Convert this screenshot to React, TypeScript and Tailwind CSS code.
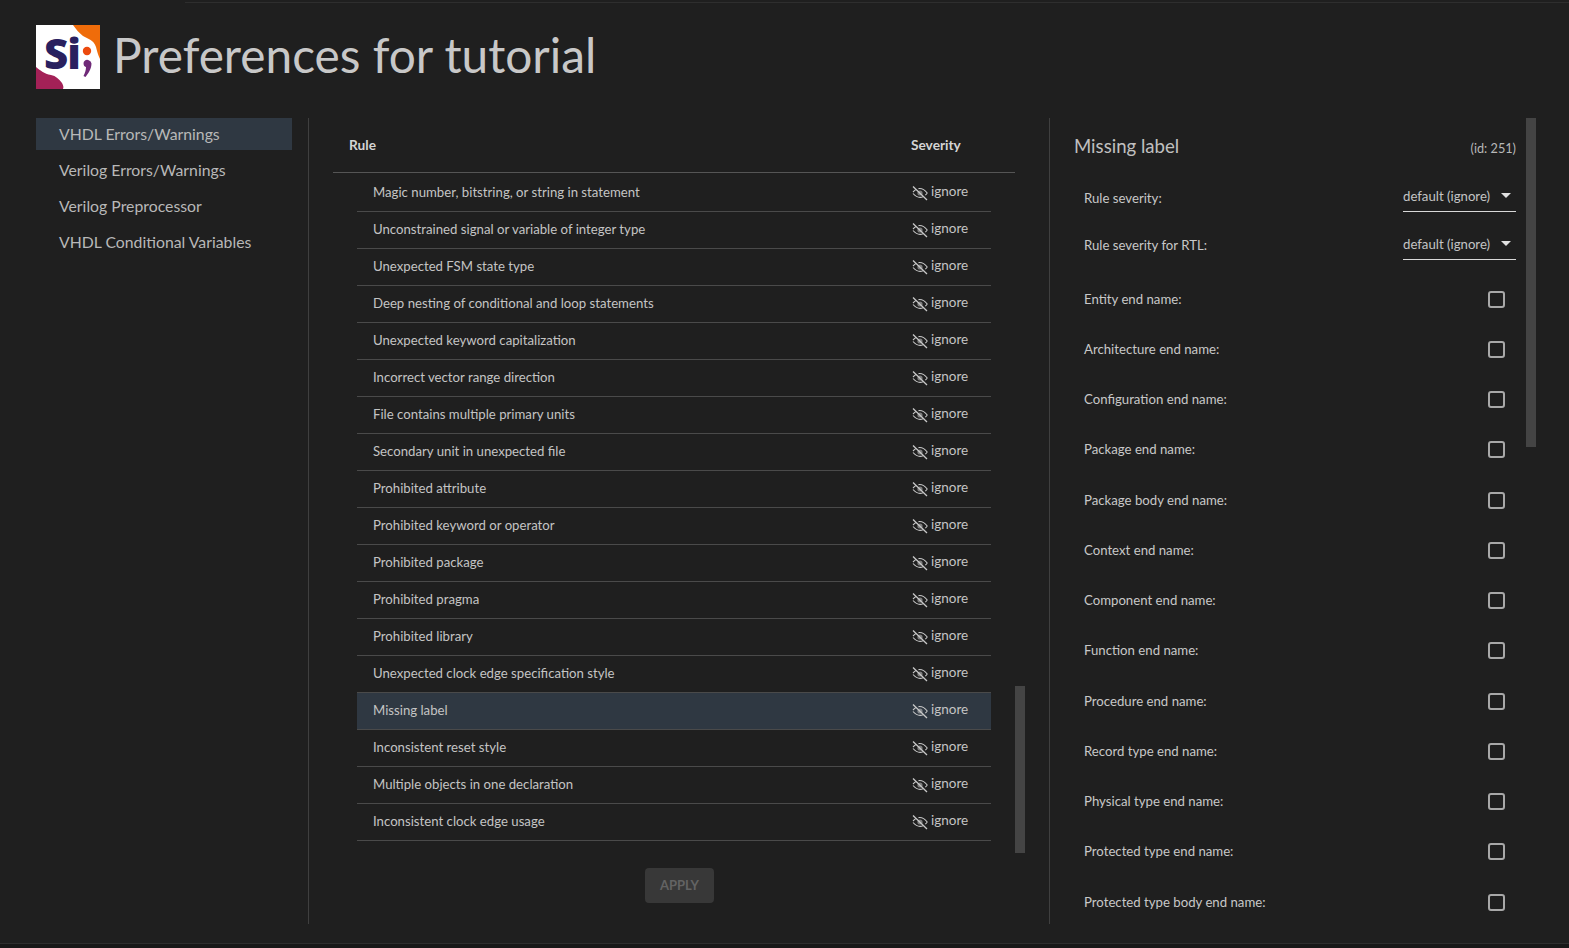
const rules = [
  "Magic number, bitstring, or string in statement",
  "Unconstrained signal or variable of integer type",
  "Unexpected FSM state type",
  "Deep nesting of conditional and loop statements",
  "Unexpected keyword capitalization",
  "Incorrect vector range direction",
  "File contains multiple primary units",
  "Secondary unit in unexpected file",
  "Prohibited attribute",
  "Prohibited keyword or operator",
  "Prohibited package",
  "Prohibited pragma",
  "Prohibited library",
  "Unexpected clock edge specification style",
  "Missing label",
  "Inconsistent reset style",
  "Multiple objects in one declaration",
  "Inconsistent clock edge usage",
];
const checks = [
  "Entity end name:",
  "Architecture end name:",
  "Configuration end name:",
  "Package end name:",
  "Package body end name:",
  "Context end name:",
  "Component end name:",
  "Function end name:",
  "Procedure end name:",
  "Record type end name:",
  "Physical type end name:",
  "Protected type end name:",
  "Protected type body end name:",
];
const nav = ["VHDL Errors/Warnings", "Verilog Errors/Warnings", "Verilog Preprocessor", "VHDL Conditional Variables"];

function Logo() {
  return (
    <svg width="64" height="64" viewBox="0 0 64 64" className="shrink-0">
      <rect width="64" height="64" fill="#ffffff" />
      <path d="M37 0H64V34C62 30 61 26 60 22C58 15 52 14 47 11C43 8 40 4 37 0Z" fill="#ef6c0a" />
      <path d="M0 42C4 45 8 49 15 50C20 51 23 54 26 58C27 60 28 62 27 64H0Z" fill="#a32157" />
      <text x="8" y="43.500" fontFamily="'Open Sans', sans-serif" fontWeight="800" fontSize="42" letterSpacing="-1" fill="#29205f">Si</text>
      <circle cx="51" cy="26" r="4.200" fill="#ec4a0e" />
      <path d="M48.500 36a4.200 4.200 0 0 1 7 2.500c0 5-3 10-6 13.500l-2-1c1.500-3 2.500-6 2.500-9c-2 0-3.500-4-1.500-6Z" fill="#6f2a78" />
    </svg>
  );
}

function EyeOff() {
  return (
    <svg width="16" height="16" viewBox="0 0 16 16" fill="none" stroke="#c8c8c8" strokeWidth="1.1" className="shrink-0">
      <path d="M1 1.500L15 15" strokeWidth="1.300" />
      <path d="M1 7C2 6 3 5 4 4.500M6.500 3.600C10 3.200 13 5 15.200 8C14.600 8.900 14 9.600 13.300 10.200M11 11.800C8 13 4 12 1 8.500" />
      <circle cx="8" cy="8" r="2.600" fill="#c8c8c8" fillOpacity="0.55" stroke="none" />
    </svg>
  );
}

function Select() {
  return (
    <div className="flex h-[27px] w-[113px] items-center justify-between border-b border-[#d8d8d8] pb-[4px] pr-[5px]">
      <span className="mt-[2px] text-[13.2px] text-[#c4c4c4]">default (ignore)</span>
      <span className="h-0 w-0 border-x-[5px] border-t-[5px] border-x-transparent border-t-[#e0e0e0]" />
    </div>
  );
}

export default function App() {
  return (
    <div className="flex h-[948px] w-full flex-col overflow-hidden bg-[#1f1f1f] text-[#c8c8c8]" style={{ fontFamily: "Lato, sans-serif" }}>
      <div className="ml-[185px] h-[3px] shrink-0 border-b border-[#2e2e2e]" />
      <div className="flex items-center gap-[14px] pb-[29px] pl-9 pt-[22px]">
        <Logo />
        <h1 className="-mt-[5px] -ml-px text-[47.8px] font-normal leading-[64px] text-[#c8c8c8]">Preferences for tutorial</h1>
      </div>
      <div className="flex h-[806px] shrink-0 pl-9">
        <nav className="w-[256px] shrink-0">
          {nav.map((n, i) => (
            <div key={n} className={`flex items-center pl-[23px] text-[15.8px] text-[#b8b8b8] ${i === 0 ? "mb-[2px] h-8 bg-[#2f3842]" : "h-9"}`}>{n}</div>
          ))}
        </nav>
        <div className="ml-4 w-[742px] shrink-0 border-x border-[#3f3f3f] pl-6">
          <div className="flex h-[55px] w-[682px] items-center border-b border-[#555555] pl-4 text-[13.7px] font-bold text-[#d4d4d4]">
            <span className="w-[562px]">Rule</span>
            <span>Severity</span>
          </div>
          <div className="flex h-[668px] items-start">
            <div className="ml-6 w-[634px] shrink-0">
              {rules.map((r, i) => (
                <div key={r} className={`flex items-center border-b border-[#4a4a4a] pl-4 text-[13.2px] ${i === 0 ? "h-[39px]" : "h-[37px] pb-[2px]"} ${r === "Missing label" ? "bg-[#2f3842]" : ""}`}>
                  <span className="mt-[2px] w-[539px] text-[#c4c4c4]">{r}</span>
                  <span className="flex items-center gap-[3px] text-[#c4c4c4]"><span className="mt-[2px] shrink-0"><EyeOff /></span><span className="-mt-px text-[13.5px]">ignore</span></span>
                </div>
              ))}
            </div>
            <div className="ml-6 mt-[513px] h-[167px] w-2.5 shrink-0 bg-[#444444]" />
          </div>
          <div className="mt-[27px] flex w-[682px] justify-center pl-[11px]">
            <button className="h-[35px] w-[69px] rounded bg-[#383838] text-[13px] font-bold text-[#636363]">APPLY</button>
          </div>
        </div>
        <div className="flex shrink-0">
          <div className="w-[466px] shrink-0 pl-6">
            <div className="flex h-[56px] items-center justify-between">
              <span className="mt-[2px] text-[18.6px] text-[#c0c0c0]">Missing label</span>
              <span className="mt-[6px] text-[12.7px] text-[#b8b8b8]">(id: 251)</span>
            </div>
            <div className="flex h-[48px] items-center justify-between pl-[10px]">
              <span className="mt-[2px] text-[13.2px]">Rule severity:</span><Select />
            </div>
            <div className="flex h-[48px] items-center justify-between pl-[10px]">
              <span className="text-[13.2px]">Rule severity for RTL:</span><Select />
            </div>
            <div className="mt-[4px]">
              {checks.map(c => (
                <div key={c} className="flex h-[50.25px] items-center justify-between pl-[10px] pr-[11px]">
                  <span className="mt-px text-[13.2px]">{c}</span>
                  <span className="h-[17px] w-[17px] rounded-[3px] border-2 border-[#a8a8a8]" />
                </div>
              ))}
            </div>
          </div>
          <div className="ml-[10px] h-[329px] w-2.5 shrink-0 bg-[#444444]" />
        </div>
      </div>
      <div className="mt-[19px] flex-1 border-t border-[#2e2e2e] bg-[#181818]" />
    </div>
  );
}
